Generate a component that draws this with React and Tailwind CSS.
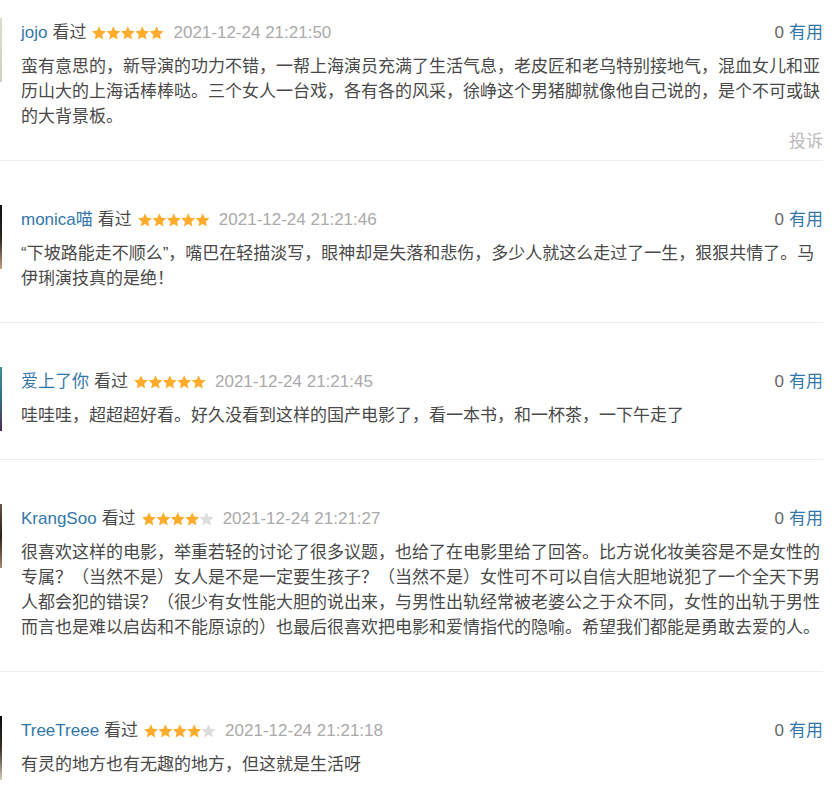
import React from "react";

const STAR =
  "7,0.3 9,4.85 13.94,5.34 10.23,8.65 11.29,13.51 7,11 2.71,13.51 3.77,8.65 0.06,5.34 5,4.85";

function Stars({ count }) {
  return (
    <svg width="72" height="14" viewBox="0 0 72 14" className="shrink-0">
      {[0, 1, 2, 3, 4].map((i) => (
        <polygon
          key={i}
          points={STAR}
          transform={`translate(${i * 14.4} 0)`}
          fill={i < count ? "#ffac2d" : "#dddddd"}
        />
      ))}
    </svg>
  );
}

const reviews = [
  {
    name: "jojo",
    stars: 5,
    time: "2021-12-24 21:21:50",
    avatar: "bg-gradient-to-b from-[#d9dcc9] to-[#cfd3bd]",
    text: "蛮有意思的，新导演的功力不错，一帮上海演员充满了生活气息，老皮匠和老乌特别接地气，混血女儿和亚历山大的上海话棒棒哒。三个女人一台戏，各有各的风采，徐峥这个男猪脚就像他自己说的，是个不可或缺的大背景板。",
    hover: true,
  },
  {
    name: "monica喵",
    stars: 5,
    time: "2021-12-24 21:21:46",
    avatar: "bg-gradient-to-b from-[#111111] via-[#2a2420] to-[#c9a27c]",
    text: "“下坡路能走不顺么”，嘴巴在轻描淡写，眼神却是失落和悲伤，多少人就这么走过了一生，狠狠共情了。马伊琍演技真的是绝！",
  },
  {
    name: "爱上了你",
    stars: 5,
    time: "2021-12-24 21:21:45",
    avatar: "bg-gradient-to-b from-[#3f8f98] via-[#2f6d86] to-[#4a2a5c]",
    text: "哇哇哇，超超超好看。好久没看到这样的国产电影了，看一本书，和一杯茶，一下午走了",
  },
  {
    name: "KrangSoo",
    stars: 4,
    time: "2021-12-24 21:21:27",
    avatar: "bg-gradient-to-b from-[#6b5443] via-[#2b211b] to-[#a88a6b]",
    text: "很喜欢这样的电影，举重若轻的讨论了很多议题，也给了在电影里给了回答。比方说化妆美容是不是女性的专属？（当然不是）女人是不是一定要生孩子？（当然不是）女性可不可以自信大胆地说犯了一个全天下男人都会犯的错误？（很少有女性能大胆的说出来，与男性出轨经常被老婆公之于众不同，女性的出轨于男性而言也是难以启齿和不能原谅的）也最后很喜欢把电影和爱情指代的隐喻。希望我们都能是勇敢去爱的人。",
  },
  {
    name: "TreeTreee",
    stars: 4,
    time: "2021-12-24 21:21:18",
    avatar: "bg-gradient-to-b from-[#0d0d0d] via-[#3a3128] to-[#d6cdb8]",
    text: "有灵的地方也有无趣的地方，但这就是生活呀",
  },
];

export default function App() {
  return (
    <div
      className="min-h-screen bg-white overflow-hidden text-[17px] text-[#494949] [text-spacing-trim:space-all]"
      style={{ fontFamily: '"Liberation Sans", "Noto Sans CJK SC", sans-serif' }}
    >
      {reviews.map((r) => (
        <div
          key={r.name}
          className="flex ml-[-62px] mr-[12px] border-b border-[#ececec] pt-[46px] pb-[6px] first:pt-[20px]"
        >
          {/* avatar, mostly off the left edge */}
          <div className={`w-16 h-16 shrink-0 -mt-[2px] ${r.avatar}`} />

          <div className="ml-[19px] flex-1 min-w-0">
            <div className="flex items-center justify-between h-[25px] leading-[25px]">
              <div className="flex items-center whitespace-nowrap">
                <span className="text-[#3377aa]">{r.name}</span>
                <span className="ml-[5px] text-[#494949]">看过</span>
                <span className="ml-[6px] flex items-center">
                  <Stars count={r.stars} />
                </span>
                <span className="ml-[9px] text-[#aaaaaa]">{r.time}</span>
              </div>
              <div className="whitespace-nowrap">
                <span className="text-[#666666]">0</span>
                <span className="ml-[5px] text-[#3377aa]">有用</span>
              </div>
            </div>

            <p className="mt-[9px] leading-[25px] break-all">{r.text}</p>

            <div
              className={`text-right leading-[25px] text-[#bbbbbb] ${
                r.hover ? "visible" : "invisible"
              }`}
            >
              投诉
            </div>
          </div>
        </div>
      ))}
    </div>
  );
}
